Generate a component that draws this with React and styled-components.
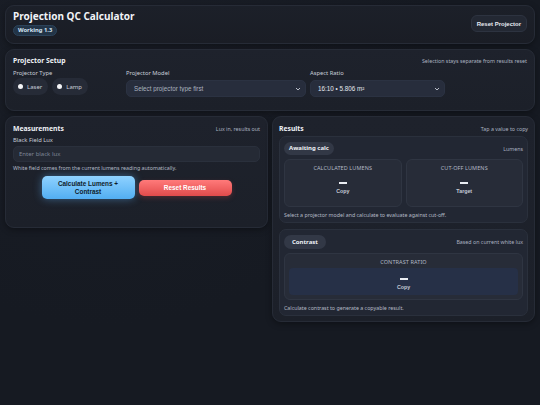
import React, { useState } from 'react';
import styled, { createGlobalStyle } from 'styled-components';

const GlobalStyle = createGlobalStyle`
  html, body {
    margin: 0;
    padding: 0;
    background: #161a22;
  }
  body {
    font-family: "Noto Sans", "Open Sans", sans-serif;
    color: #e6e9f0;
  }
  * {
    box-sizing: border-box;
  }
`;

const Page = styled.div`
  min-height: 405px;
  padding: 5px;
  background: radial-gradient(circle at 20% 0%, #1a1e27 0%, #161a22 55%);

  display: flex;
  flex-direction: column;
  gap: 5px;
`;

const Card = styled.section`
  background: linear-gradient(180deg, #1e222c 0%, #1c2029 100%);
  border: 1px solid #262b36;
  border-radius: 9px;
  box-shadow: 0 2px 6px rgba(0, 0, 0, 0.35);
  padding: ${p => p.$pad || '6px 7px'};
`;

const Header = styled(Card)`
  display: flex;
  justify-content: space-between;
  align-items: center;
  padding: 4px 7px 7px 7px;
  background: linear-gradient(180deg, #1c2029 0%, #1a1d25 100%);
`;

const TitleBlock = styled.div`
  display: flex;
  flex-direction: column;
  align-items: flex-start;
  gap: 3px;
`;

const Title = styled.h1`
  margin: 0;
  font-size: 10px;
  font-weight: 700;
  line-height: 12px;
  color: #f1f3f7;
`;

const Badge = styled.span`
  display: block;
  height: 11px;
  padding: 0 4px;
  font-size: 5.8px;
  font-weight: 700;
  line-height: 9px;
  color: #d6e6f5;
  background: #223447;
  border: 1px solid #2c435a;
  border-radius: 7px;
`;

const GhostButton = styled.button`
  height: 17px;
  padding: 0 5px;
  font-family: "Liberation Sans", Arial, sans-serif;
  font-size: 6px;
  font-weight: 700;
  color: #e8ebf1;
  background: #232833;
  border: 1px solid #2d3340;
  border-radius: 6px;
  margin-top: 1px;
  cursor: pointer;
`;

const CardHead = styled.div`
  display: flex;
  justify-content: space-between;
  align-items: center;
  margin-bottom: ${p => p.$gap || '2px'};
`;

const CardTitle = styled.h2`
  margin: 0;
  font-size: 6.8px;
  font-weight: 700;
  line-height: 11px;
  color: #eef1f6;
`;

const Hint = styled.span`
  font-size: 5.3px;
  color: #aab2c0;
`;

const SetupGrid = styled.div`
  display: grid;
  grid-template-columns: 109px 180px 135px;
  column-gap: 4px;
  align-items: start;
`;

const Field = styled.div`
  display: flex;
  flex-direction: column;
  gap: ${p => p.$gap || '1px'};
`;

const Label = styled.label`
  font-size: 5.8px;
  line-height: 8px;
  color: #c9ced8;
`;

const RadioRow = styled.div`
  display: flex;
  gap: 4px;
`;

const RadioPill = styled.label`
  display: flex;
  align-items: center;
  gap: 4px;
  height: 17px;
  padding: 0 6px 0 5px;
  font-size: 6px;
  color: #c9ced8;
  background: #262b37;
  border-radius: 9px;
  cursor: pointer;
`;

const Dot = styled.span`
  width: 5px;
  height: 5px;
  border-radius: 50%;
  background: #f4f5f7;
`;

const Select = styled.select`
  appearance: none;
  height: 17px;
  width: 100%;
  margin-top: 2px;
  padding: 0 6px 0 7px;
  font-family: "Liberation Sans", Arial, sans-serif;
  font-size: 6.3px;
  color: ${p => (p.$muted ? '#aab1be' : '#e4e7ee')};
  background-color: #272d3c;
  background-image: url("data:image/svg+xml,%3Csvg xmlns='http://www.w3.org/2000/svg' width='6' height='4' viewBox='0 0 6 4'%3E%3Cpath d='M1 1l2 2 2-2' fill='none' stroke='%23c9ced8' stroke-width='0.9'/%3E%3C/svg%3E");
  background-repeat: no-repeat;
  background-position: right 4px center;
  border: 1px solid #2b3242;
  border-radius: 5px;
`;

const Columns = styled.div`
  display: grid;
  grid-template-columns: 1fr 1fr;
  gap: 4px;
  align-items: start;
`;

const TextInput = styled.input`
  width: 100%;
  height: 16px;
  padding: 0 5px;
  font-family: "Noto Sans", sans-serif;
  font-size: 6px;
  color: #e4e7ee;
  background: #252a35;
  border: 1px solid #2a303c;
  border-radius: 5px;
  &::placeholder {
    color: #7e8696;
  }
`;

const Helper = styled.p`
  margin: ${p => p.$m || '0'};
  font-size: 5.3px;
  line-height: 8px;
  color: #b4bac6;
`;

const ButtonRow = styled.div`
  display: flex;
  justify-content: center;
  align-items: center;
  gap: 4px;
  margin: 4px 0 28px;
`;

const ActionButton = styled.button`
  width: 93px;
  height: ${p => (p.$tall ? '23px' : '16px')};
  font-family: "Liberation Sans", Arial, sans-serif;
  font-size: 6.4px;
  font-weight: 700;
  line-height: 8px;
  border: none;
  border-radius: 5px;
  cursor: pointer;
  color: ${p => (p.$variant === 'danger' ? '#ffffff' : '#0f1c2b')};
  background: ${p =>
    p.$variant === 'danger'
      ? 'linear-gradient(180deg, #ff7a7a 0%, #e24b4b 100%)'
      : 'linear-gradient(180deg, #8fd2ff 0%, #52aef2 100%)'};
  box-shadow: ${p =>
    p.$variant === 'danger'
      ? '0 2px 5px rgba(226, 75, 75, 0.25)'
      : '0 0 8px rgba(95, 180, 250, 0.45)'};
`;

const Stack = styled.div`
  display: flex;
  flex-direction: column;
  gap: 6px;
`;

const SubCard = styled.div`
  background: #222733;
  border: 1px solid #2a303c;
  border-radius: 7px;
  padding: 5px 4px 3px;
  display: flex;
  flex-direction: column;
  gap: 4px;
`;

const Pill = styled.span`
  display: inline-block;
  padding: 0 ${p => (p.$wide ? '8px' : '5px')};
  height: ${p => p.$h || '13px'};
  line-height: ${p => p.$h || '13px'};
  font-size: 6px;
  font-weight: 700;
  color: #eef1f6;
  background: #323846;
  border-radius: 8px;
`;

const TileRow = styled.div`
  display: grid;
  grid-template-columns: 1fr 1fr;
  gap: 4px;
`;

const Tile = styled.button`
  display: flex;
  flex-direction: column;
  align-items: center;
  height: ${p => p.$h || '48px'};
  padding: 5px 4px 4px;
  font-family: "Noto Sans", sans-serif;
  background: #272c38;
  border: 1px solid #2f3542;
  border-radius: 6px;
  cursor: pointer;
`;

const TileLabel = styled.span`
  font-size: 5.5px;
  line-height: 7px;
  letter-spacing: 0.1px;
  color: #b2b8c4;
`;

const ValueWell = styled.span`
  width: 100%;
  margin-top: ${p => p.$mt || '9px'};
  display: flex;
  flex-direction: column;
  align-items: center;
  gap: 4px;
  padding: ${p => (p.$filled ? '10px 0 5px' : '0')};
  height: ${p => (p.$filled ? '28px' : 'auto')};
  background: ${p => (p.$filled ? '#263047' : 'transparent')};
  border-radius: 4px;
`;

const Dash = styled.span`
  width: 8px;
  height: 1.5px;
  background: #e9ecf2;
`;

const ValueCaption = styled.span`
  font-family: "Liberation Sans", Arial, sans-serif;
  font-size: 5.3px;
  line-height: 6px;
  font-weight: 700;
  color: #c3c9d4;
`;

export default function App() {
  const [type, setType] = useState('');
  const [blackLux, setBlackLux] = useState('');

  return (
    <>
      <GlobalStyle />
      <Page>
        <Header>
          <TitleBlock>
            <Title>Projection QC Calculator</Title>
            <Badge>Working 1.3</Badge>
          </TitleBlock>
          <GhostButton>Reset Projector</GhostButton>
        </Header>

        <Card $pad="5px 7px 13px">
          <CardHead $gap="3px">
            <CardTitle>Projector Setup</CardTitle>
            <Hint>Selection stays separate from results reset</Hint>
          </CardHead>
          <SetupGrid>
            <Field>
              <Label>Projector Type</Label>
              <RadioRow>
                <RadioPill onClick={() => setType('laser')}>
                  <Dot />
                  Laser
                </RadioPill>
                <RadioPill onClick={() => setType('lamp')}>
                  <Dot />
                  Lamp
                </RadioPill>
              </RadioRow>
            </Field>
            <Field>
              <Label>Projector Model</Label>
              <Select $muted defaultValue="">
                <option value="">
                  {type ? 'Select a model' : 'Select projector type first'}
                </option>
              </Select>
            </Field>
            <Field>
              <Label>Aspect Ratio</Label>
              <Select defaultValue="16:10">
                <option value="16:10">16:10 • 5.806 m²</option>
              </Select>
            </Field>
          </SetupGrid>
        </Card>

        <Columns>
          <Card $pad="6px 7px 0">
            <CardHead>
              <CardTitle>Measurements</CardTitle>
              <Hint>Lux in, results out</Hint>
            </CardHead>
            <Field $gap="2px">
              <Label>Black Field Lux</Label>
              <TextInput
                placeholder="Enter black lux"
                value={blackLux}
                onChange={e => setBlackLux(e.target.value)}
              />
            </Field>
            <Helper $m="2px 0 0">
              White field comes from the current lumens reading automatically.
            </Helper>
            <ButtonRow>
              <ActionButton $tall>
                Calculate Lumens +
                <br />
                Contrast
              </ActionButton>
              <ActionButton $variant="danger" onClick={() => setBlackLux('')}>
                Reset Results
              </ActionButton>
            </ButtonRow>
          </Card>

          <Card $pad="6px 6px 5px">
            <CardHead>
              <CardTitle>Results</CardTitle>
              <Hint>Tap a value to copy</Hint>
            </CardHead>

            <Stack>
              <SubCard>
                <CardHead $gap="0">
                  <Pill>Awaiting calc</Pill>
                  <Hint>Lumens</Hint>
                </CardHead>
                <TileRow>
                  <Tile>
                    <TileLabel>CALCULATED LUMENS</TileLabel>
                    <ValueWell $mt="10px">
                      <Dash />
                      <ValueCaption>Copy</ValueCaption>
                    </ValueWell>
                  </Tile>
                  <Tile>
                    <TileLabel>CUT-OFF LUMENS</TileLabel>
                    <ValueWell $mt="10px">
                      <Dash />
                      <ValueCaption>Target</ValueCaption>
                    </ValueWell>
                  </Tile>
                </TileRow>
                <Helper>
                  Select a projector model and calculate to evaluate against cut-off.
                </Helper>
              </SubCard>

              <SubCard>
                <CardHead $gap="0">
                  <Pill $h="14px" $wide>Contrast</Pill>
                  <Hint>Based on current white lux</Hint>
                </CardHead>
                <Tile $h="47px">
                  <TileLabel>CONTRAST RATIO</TileLabel>
                  <ValueWell $filled $mt="2px">
                    <Dash />
                    <ValueCaption>Copy</ValueCaption>
                  </ValueWell>
                </Tile>
                <Helper>Calculate contrast to generate a copyable result.</Helper>
              </SubCard>
            </Stack>
          </Card>
        </Columns>
      </Page>
    </>
  );
}
